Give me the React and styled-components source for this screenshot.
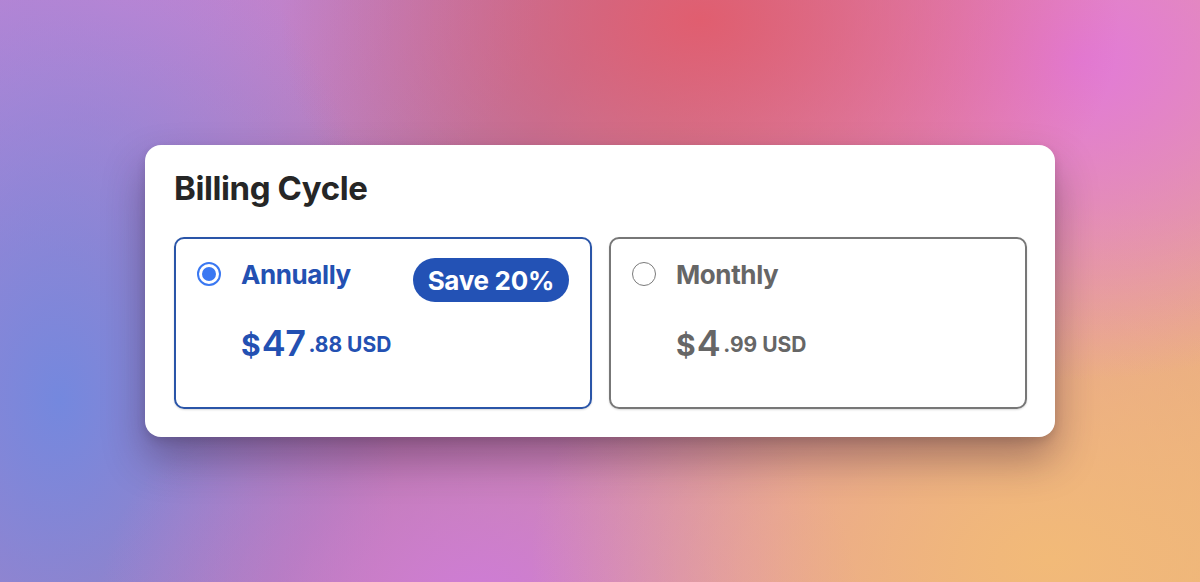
import React, { useState } from "react";
import styled, { createGlobalStyle } from "styled-components";

const GlobalStyle = createGlobalStyle`
  html, body {
    margin: 0;
    padding: 0;
    height: 100%;
  }
  body {
    font-family: Inter, "Noto Sans", "Liberation Sans", sans-serif;
    -webkit-font-smoothing: antialiased;
  }
  #root {
    height: 100%;
  }
`;

const Backdrop = styled.div`
  width: 100%;
  height: 582px;
  display: flex;
  align-items: center;
  justify-content: center;
  background:
    radial-gradient(ellipse 420px 300px at 700px 20px, rgba(226, 92, 108, 0.95), rgba(226, 92, 108, 0) 100%),
    radial-gradient(ellipse 420px 320px at 1080px 60px, rgba(226, 122, 216, 1), rgba(226, 122, 216, 0) 100%),
    radial-gradient(ellipse 520px 360px at 1050px 560px, rgba(242, 186, 120, 1), rgba(242, 186, 120, 0) 100%),
    radial-gradient(ellipse 380px 260px at 480px 600px, rgba(206, 124, 214, 1), rgba(206, 124, 214, 0) 100%),
    radial-gradient(ellipse 340px 520px at 60px 400px, rgba(116, 136, 222, 1), rgba(116, 136, 222, 0) 100%),
    radial-gradient(ellipse 420px 260px at 120px 0px, rgba(198, 132, 210, 1), rgba(198, 132, 210, 0) 100%),
    linear-gradient(120deg, #b884d4 0%, #b67aa8 40%, #e49aa0 70%, #eab07e 100%);
`;

const Card = styled.section`
  width: 910px;
  height: 292px;
  box-sizing: border-box;
  background: #ffffff;
  border-radius: 16px;
  padding: 22px 28px 28px 29px;
  display: flex;
  flex-direction: column;
  gap: 28px;
  box-shadow: 0 22px 40px rgba(50, 20, 50, 0.38), 0 4px 10px rgba(0, 0, 0, 0.12);
`;

const Title = styled.h2`
  margin: 0;
  font-size: 33px;
  line-height: 42px;
  font-weight: 700;
  letter-spacing: -0.4px;
  color: #262626;
`;

const Options = styled.div`
  flex: 1;
  display: grid;
  grid-template-columns: 1fr 1fr;
  gap: 17px;
`;

const Option = styled.label`
  box-sizing: border-box;
  border: 2px solid ${(p) => (p.$active ? "#2a55a8" : "#777777")};
  border-radius: 10px;
  padding: 19px 21px 20px 21px;
  display: flex;
  flex-direction: column;
  gap: 19px;
  cursor: pointer;
  color: ${(p) => (p.$active ? "#2350b2" : "#666666")};
  box-shadow: 0 1px 2px rgba(0, 0, 0, 0.15);
`;

const Head = styled.div`
  display: flex;
  align-items: center;
  justify-content: space-between;
  height: 44px;
`;

const LabelGroup = styled.div`
  display: flex;
  align-items: center;
  gap: 20px;
  margin-top: -12px;
`;

const Radio = styled.span`
  width: 24px;
  height: 24px;
  box-sizing: border-box;
  border-radius: 50%;
  border: ${(p) => (p.$checked ? "2px solid #3a78f2" : "1.5px solid #7a7a7a")};
  display: flex;
  align-items: center;
  justify-content: center;

  &::after {
    content: "";
    display: ${(p) => (p.$checked ? "block" : "none")};
    width: 14px;
    height: 14px;
    border-radius: 50%;
    background: #3a78f2;
  }
`;

const Name = styled.span`
  font-size: 26px;
  font-weight: 700;
  letter-spacing: -0.4px;
`;

const Badge = styled.span`
  height: 44px;
  box-sizing: border-box;
  padding: 0 15px;
  border-radius: 22px;
  background: #2352b5;
  color: #ffffff;
  font-size: 26px;
  font-weight: 700;
  letter-spacing: -0.3px;
  display: flex;
  align-items: center;
`;

const Price = styled.div`
  display: flex;
  align-items: baseline;
  padding-left: 44px;
  font-weight: 700;
`;

const Currency = styled.span`
  font-size: 30px;
  margin-right: 1px;
`;

const Whole = styled.span`
  font-size: 36px;
  font-weight: 600;
  letter-spacing: -0.5px;
`;

const Cents = styled.span`
  font-size: 21px;
  position: relative;
  top: -4px;
  margin-left: 3px;
`;

const plans = [
  { id: "annual", name: "Annually", whole: "47", cents: ".88 USD", badge: "Save 20%" },
  { id: "monthly", name: "Monthly", whole: "4", cents: ".99 USD" },
];

export default function App() {
  const [selected, setSelected] = useState("annual");

  return (
    <>
      <GlobalStyle />
      <Backdrop>
        <Card>
          <Title>Billing Cycle</Title>
          <Options>
            {plans.map((plan) => {
              const active = plan.id === selected;
              return (
                <Option key={plan.id} $active={active} onClick={() => setSelected(plan.id)}>
                  <Head>
                    <LabelGroup>
                      <Radio $checked={active} />
                      <Name>{plan.name}</Name>
                    </LabelGroup>
                    {plan.badge && <Badge>{plan.badge}</Badge>}
                  </Head>
                  <Price>
                    <Currency>$</Currency>
                    <Whole>{plan.whole}</Whole>
                    <Cents>{plan.cents}</Cents>
                  </Price>
                </Option>
              );
            })}
          </Options>
        </Card>
      </Backdrop>
    </>
  );
}
